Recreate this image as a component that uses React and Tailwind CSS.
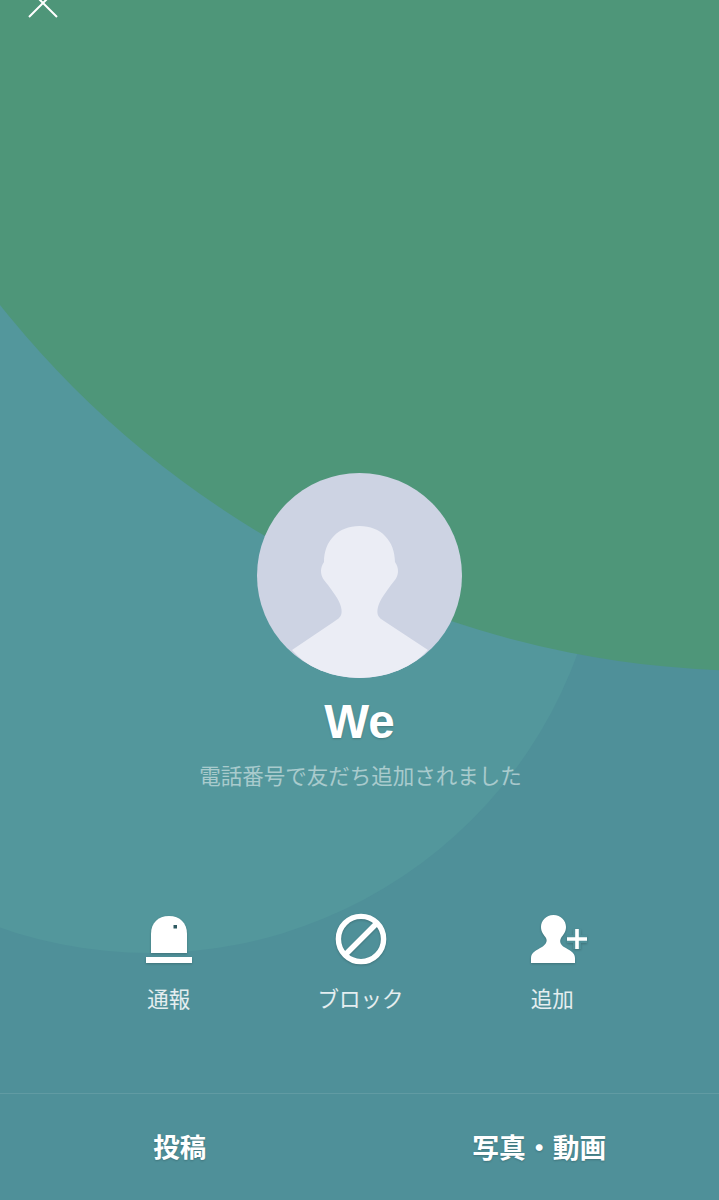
const font = "font-['Liberation_Sans','Noto_Sans_CJK_JP',sans-serif]";

function SirenIcon() {
  return (
    <svg width="46" height="50" viewBox="0 0 46 50" fill="none">
      <path d="M5 39V20C5 9 12 2 23 2C34 2 41 9 41 20V39Z" fill="#fff" />
      <rect x="27.5" y="11" width="3.5" height="3.5" fill="#2f5a62" />
      <rect x="0" y="43" width="46" height="6" fill="#fff" />
    </svg>
  );
}

function BlockIcon() {
  return (
    <svg width="52" height="52" viewBox="0 0 52 52" fill="none" stroke="#fff" strokeWidth="5.4">
      <circle cx="26" cy="26" r="22.6" />
      <path d="M10 42L42 10" />
    </svg>
  );
}

function AddFriendIcon() {
  return (
    <svg width="56" height="50" viewBox="0 0 56 50" fill="none">
      <path
        d="M22.5 1C15 1 10 7 10 13C10 18 13 21 15 24C17 28 14 31 11 33C6 36 0 38 0 44V49H44V44C44 38 38 36 33 33C30 31 28 28 30 24C32 21 35 18 35 13C35 7 30 1 22.5 1Z"
        fill="#fff"
      />
      <path d="M46 15V35M36 25H56" stroke="#4f9099" strokeWidth="8" />
      <path d="M46 15V35M36 25H56" stroke="#fff" strokeWidth="3.6" />
    </svg>
  );
}

function Avatar() {
  return (
    <div className="w-[205px] h-[205px] rounded-full bg-[#cdd3e3] overflow-hidden">
      <svg width="205" height="205" viewBox="0 0 205 205">
        <path
          d="M102.5 53C81 53 67 68 67 89C65 92 64 95 64 98C64 104 67 107 71 112C75 118 82 126 84 134C86 142 83 145 78 148L35 177C55 200 80 205 102.5 205C125 205 150 200 171 177L127 148C122 145 119 142 121 134C123 126 130 118 134 112C138 107 141 104 141 98C141 95 140 92 138 89C138 68 124 53 102.5 53Z"
          fill="#ebedf5"
        />
      </svg>
    </div>
  );
}

export default function App() {
  const actions = [
    { label: "通報", icon: <SirenIcon />, shift: "ml-[1px]" },
    { label: "ブロック", icon: <BlockIcon />, shift: "ml-[2px]" },
    { label: "追加", icon: <AddFriendIcon />, shift: "ml-[14px]" },
  ];

  return (
    <div className={`relative h-[1200px] w-full overflow-hidden bg-[#4f9099] text-white ${font}`}>
      {/* background circles */}
      <div className="absolute left-[-305px] top-[43px] w-[910px] h-[910px] rounded-full bg-[#53979c]" />
      <div className="absolute left-[-210px] top-[-1265px] w-[1936px] h-[1936px] rounded-full bg-[#4e9679]" />

      <div className="relative flex flex-col h-full">
        <div className="h-[473px] pl-[28px]">
          <svg className="-mt-[12px] block" width="30" height="30" viewBox="0 0 30 30" fill="none" stroke="#fff" strokeWidth="2">
            <path d="M1 29L29 1M1 1L29 29" />
          </svg>
        </div>

        <div className="flex flex-col items-center">
          <Avatar />
          <h1 className="mt-[17px] text-[47.5px] leading-[54px] font-bold [text-shadow:0_1px_2px_rgba(0,0,0,0.2)]">We</h1>
          <p className="mt-[12px] pl-[2px] text-[21.5px] leading-[32px] text-white/50">電話番号で友だち追加されました</p>
        </div>

        <div className="grid grid-cols-3 pl-[73px] pr-[71px] mt-[120px]">
          {actions.map((a) => (
            <button key={a.label} className="flex flex-col items-center">
              <span className={`h-[52px] flex items-center justify-center drop-shadow-[0_1px_1px_rgba(0,0,0,0.2)] ${a.shift}`}>{a.icon}</span>
              <span className="mt-[19px] text-[21.5px] leading-[32px] text-white/85">{a.label}</span>
            </button>
          ))}
        </div>

        <div className="mt-auto h-[107px] pt-[4px] border-t border-white/10 grid grid-cols-2 items-center">
          <button className="text-[26.5px] font-bold text-center [text-shadow:0_1px_2px_rgba(0,0,0,0.2)]">投稿</button>
          <button className="text-[26.8px] font-bold text-center [text-shadow:0_1px_2px_rgba(0,0,0,0.2)]">写真・動画</button>
        </div>
      </div>
    </div>
  );
}
